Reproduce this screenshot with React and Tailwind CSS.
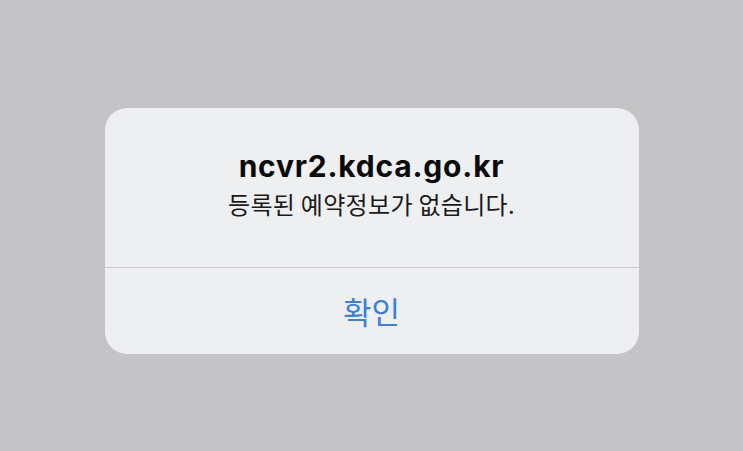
export default function App() {
  const font = { fontFamily: '"Noto Sans CJK KR", "Noto Sans", sans-serif' };
  return (
    <div className="w-[743px] h-[451px] bg-[#c4c4c6] pt-[108px] overflow-hidden" style={font}>
      <div className="mx-auto w-[534px] h-[246px] bg-[#eeeff1] rounded-[22px] flex flex-col overflow-hidden">
        <div className="h-[159px] flex flex-col items-center pt-[40px]">
          <div className="text-[30px] leading-[36px] font-bold text-[#0a0a0a] tracking-[0.8px]" style={{ fontFamily: 'Inter, "Noto Sans CJK KR", sans-serif' }}>ncvr2.kdca.go.kr</div>
          <div className="mt-[5px] text-[24px] leading-[30px] text-[#1a1a1a] tracking-[0.3px]">등록된 예약정보가 없습니다.</div>
        </div>
        <div className="h-px bg-[#c9c9cc]" />
        <div className="flex-1 flex items-center justify-center">
          <div className="text-[31px] leading-[36px] text-[#3a7fd9]">확인</div>
        </div>
      </div>
    </div>
  );
}
